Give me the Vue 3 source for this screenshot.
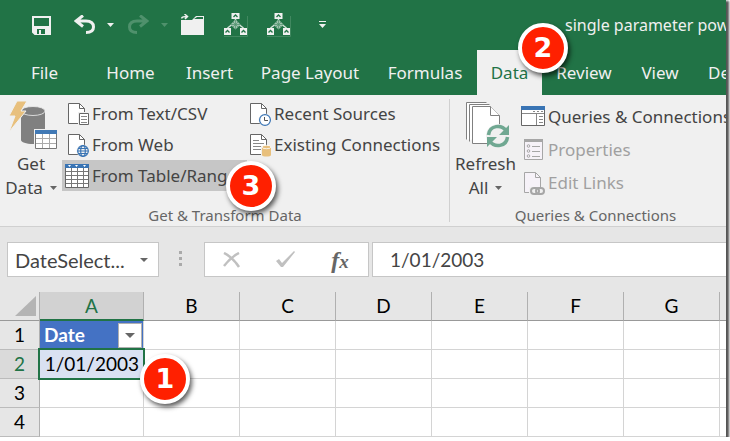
<script setup>
import { ref } from 'vue'

const tabs = ['Home', 'Insert', 'Page Layout', 'Formulas', 'Data', 'Review', 'View', 'Developer']
const activeTab = ref('Data')
const columns = ['A', 'B', 'C', 'D', 'E', 'F', 'G', 'H']
const rows = [1, 2, 3, 4]
const nameBox = ref('DateSelect...')
const formula = ref('1/01/2003')
</script>

<template>
  <main class="window">
    <header class="titlebar">
      <nav class="quick" aria-label="Quick access">
        <button aria-label="Save">
          <svg width="19" height="19" viewBox="0 0 19 19"><path d="M1 1h17v17H3l-2-2z" fill="none" stroke="#f0f0f0" stroke-width="2" /><path d="M2 10h15v8H2z" fill="#f0f0f0" /><path d="M5 13h8v5H5z" fill="#217346" /><path d="M7 14h2v4H7z" fill="#f0f0f0" /></svg>
        </button>
        <button aria-label="Undo">
          <svg width="22" height="20" viewBox="0 0 22 20"><path d="M9 .5L2 6l7 5.500M2 6h10c5 0 7.500 2.500 7.500 6S17 17.500 12 17.500" fill="none" stroke="#f0f0f0" stroke-width="3" /></svg>
        </button>
        <button aria-label="Undo options"><svg width="7" height="4"><path d="M0 0h7L3.500 4z" fill="#f0f0f0" /></svg></button>
        <button aria-label="Redo">
          <svg width="22" height="20" viewBox="0 0 22 20"><path d="M13 .5L20 6l-7 5.500M20 6H10c-5 0-7.500 2.500-7.500 6S5 17.500 10 17.500" fill="none" stroke="#4f916c" stroke-width="3" /></svg>
        </button>
        <button aria-label="Redo options"><svg width="7" height="4"><path d="M0 0h7L3.500 4z" fill="#4f916c" /></svg></button>
        <button aria-label="Open">
          <svg width="23" height="22" viewBox="0 0 23 22"><path d="M0 6h11l4-4h8v19H0z" fill="#f0f0f0" /><path d="M13 5l3-2h6v2z" fill="#217346" /><path d="M.5 4.500C1 2.500 3 2.500 6 2.500M3.500 0L6.500 2.500 4 5" fill="none" stroke="#f0f0f0" stroke-width="1.500" /></svg>
        </button>
        <button v-for="n in 2" :key="n" :aria-label="'Macro ' + n">
          <svg width="24" height="24" viewBox="0 0 24 24">
            <path d="M11.500 6v3M7.500 12L3.500 15M15.500 12l4 3" stroke="#d5e4db" stroke-width="1.500" />
            <path d="M11.500 6.500l5 5-5 5-5-5z" fill="#a0c4af" />
            <path d="M9 9l5 5M14 9l-5 5M11.500 7v9M7 11.500h9" stroke="#4f916c" stroke-width=".7" />
            <path d="M7.500 0h8v6h-8zM0 15.500h7v6H0zM8 15.500h7v6H8zM16 15.500h7v6h-7z" fill="none" />
            <path d="M7.500 0h8v6h-8zM0 15h7v7H0zM16 15h7v7h-7z" fill="#f0f0f0" />
            <path d="M9.500 4l2-2 2 2M1.500 19.500l2-2 2 2M17.500 19.500l2-2 2 2" fill="none" stroke="#217346" stroke-width="1.300" />
            <path d="M0 23.500h23.500V3" fill="none" stroke="#4f916c" stroke-width=".7" />
          </svg>
        </button>
        <button aria-label="Customize toolbar"><svg width="7" height="8"><path d="M0 0h7v1H0zM0 3h7L3.500 7z" fill="#f0f0f0" /></svg></button>
      </nav>
      <span class="title">single parameter power query</span>
    </header>

    <nav class="tabs" aria-label="Ribbon tabs">
      <button class="tab">File</button>
      <button v-for="tab in tabs" :key="tab" class="tab" :class="{ active: tab === activeTab }" @click="activeTab = tab">{{ tab }}</button>
    </nav>

    <section class="ribbon">
      <div class="group get-group">
        <button class="large">
          <svg width="49" height="50" viewBox="0 0 49 50">
            <path d="M12 9v30c0 2 5 4 12 4s12-2 12-4V9z" fill="#808080" />
            <ellipse cx="24" cy="10" rx="12" ry="4.500" fill="#808080" stroke="#f0f0f0" stroke-width=".8" />
            <path d="M8 0h10l-6 10h5L0 31l6-16H0z" fill="#e8c07d" stroke="#f0f0f0" />
            <path d="M25 28h24v22H25z" fill="#f0f0f0" />
            <path d="M26.500 30.500h21v17h-21z" fill="#fff" stroke="#777" />
            <path d="M33.500 32v15M40.500 32v15M27 37.500h20M27 42.500h20" stroke="#aaa" />
            <path d="M26 29h22v4H26z" fill="#4179b5" />
          </svg>
          <span>Get</span>
          <span class="with-arrow">Data <svg width="7" height="4"><path d="M0 0h7L3.500 4z" fill="#666" /></svg></span>
        </button>
        <div class="commands first">
          <button class="command">
            <svg width="24" height="24" viewBox="0 0 24 24"><path d="M3.500 1.500h11l5 5v15h-16z" fill="#fff" stroke="#666" /><path d="M14.500 1.500v5h5" fill="none" stroke="#666" /><path d="M13 10h11v14H13z" fill="#f0f0f0" /><path d="M14.500 11.500h9v11h-9z" fill="#fff" stroke="#666" /><path d="M16 14.500h6M16 17.500h6M16 20.500h6" stroke="#888" /></svg>
            From Text/CSV
          </button>
          <button class="command">
            <svg width="24" height="24" viewBox="0 0 24 24"><path d="M3.500 1.500h11l5 5v15h-16z" fill="#fff" stroke="#666" /><path d="M14.500 1.500v5h5" fill="none" stroke="#666" /><circle cx="18" cy="18" r="6.500" fill="#f0f0f0" /><g fill="none" stroke="#3974b4" stroke-width="1.200"><circle cx="18" cy="18" r="5.300" /><ellipse cx="18" cy="18" rx="2.300" ry="5.300" /><path d="M12.500 18h11M13.500 15.500h9M13.500 20.500h9" /></g></svg>
            From Web
          </button>
          <button class="command selected">
            <svg width="24" height="24" viewBox="0 0 24 24"><path d="M.5.500h23v23H.5z" fill="#fff" stroke="#666" /><path d="M6.500 4v19M12.500 4v19M18.500 4v19M1 7.500h22M1 11.500h22M1 15.500h22M1 19.500h22" stroke="#777" /><path d="M0 0h24v4H0z" fill="#3974b4" /><path d="M3 1h3L4.500 3zM10 1h3l-1.500 2zM18 1h3l-1.500 2z" fill="#fff" /></svg>
            From Table/Range
          </button>
        </div>
        <div class="commands">
          <button class="command">
            <svg width="24" height="24" viewBox="0 0 24 24"><path d="M3.500 1.500h11l5 5v15h-16z" fill="#fff" stroke="#666" /><path d="M14.500 1.500v5h5" fill="none" stroke="#666" /><circle cx="18" cy="18" r="6.500" fill="#f0f0f0" /><circle cx="18" cy="18" r="5.400" fill="#fff" stroke="#3974b4" stroke-width="1.200" /><path d="M17.500 15v3.500H21" fill="none" stroke="#555" /></svg>
            Recent Sources
          </button>
          <button class="command">
            <svg width="24" height="24" viewBox="0 0 24 24"><path d="M3.500 1.500h11l5 5v15h-16z" fill="#fff" stroke="#666" /><path d="M14.500 1.500v5h5" fill="none" stroke="#666" /><path d="M6 7.500h6M6 10.500h11M6 13.500h8M6 16.500h8" stroke="#888" /><path d="M14 13h10v11H14z" fill="#f0f0f0" /><path d="M15 14v8c0 2 9 2 9 0v-8z" fill="#e8c07d" /><ellipse cx="19.500" cy="14" rx="4.500" ry="1.700" fill="#e8c07d" stroke="#fff" stroke-width=".8" /></svg>
            Existing Connections
          </button>
        </div>
        <p class="caption">Get &amp; Transform Data</p>
      </div>

      <div class="group query-group">
        <button class="large">
          <svg width="45" height="50" viewBox="0 0 45 50">
            <g fill="#fff" stroke="#808080"><path d="M.5 38.500v-37h20v37" stroke="none" /><path d="M.5 38.500v-37h20" fill="none" /><path d="M3.500 40.500v-37h20v5" stroke="none" /><path d="M3.500 40.500v-37h20" fill="none" /><path d="M6.500 5.500h18l9 9v28h-27z" /><path d="M24.500 5.500v9h9" /></g>
            <circle cx="32" cy="35" r="12" fill="#f0f0f0" />
            <g fill="none" stroke="#70a892" stroke-width="3.500"><path d="M22.500 34c1-10 13-11 18-4M41.500 36c-1 10-13 11-18 4" /></g>
            <path d="M43 24v10H33zM21 46V36h10z" fill="#70a892" />
          </svg>
          <span>Refresh</span>
          <span class="with-arrow">All <svg width="7" height="4"><path d="M0 0h7L3.500 4z" fill="#666" /></svg></span>
        </button>
        <div class="commands second">
          <button class="command">
            <svg width="24" height="24" viewBox="0 0 24 24"><path d="M.5 2.500h23v18H.5z" fill="#fff" stroke="#666" /><path d="M0 1h24v4H0z" fill="#3974b4" /><path d="M12 6.500h2M16 6.500h2M20 6.500h2M15.500 9v11M1 8.500h22" stroke="#888" /><path d="M18 11.500h4M18 14.500h4M18 17.500h4" stroke="#888" /></svg>
            Queries &amp; Connections
          </button>
          <button class="command" disabled>
            <svg width="24" height="24" viewBox="0 0 24 24"><path d="M3.500 1.500h18v20h-18z" fill="#f6f2f8" stroke="#a6a6a6" /><path d="M3 1h19v3H3z" fill="#a6a6a6" /><g fill="none" stroke="#a6a6a6"><circle cx="7.500" cy="8" r="1.300" /><circle cx="7.500" cy="13" r="1.300" /><circle cx="7.500" cy="18" r="1.300" /><path d="M11 8.500h8M11 13.500h8M11 18.500h8" /></g></svg>
            Properties
          </button>
          <button class="command" disabled>
            <svg width="24" height="24" viewBox="0 0 24 24"><path d="M3.500 1.500h11l5 5v15h-16z" fill="#f6f2f8" stroke="#a6a6a6" /><path d="M14.500 1.500v5h5" fill="none" stroke="#a6a6a6" /><path d="M8 16h16v8H8z" fill="#f0f0f0" /><g fill="none" stroke="#a6a6a6" stroke-width="2"><rect x="10" y="17" width="8" height="6" rx="3" /><rect x="15" y="17" width="8" height="6" rx="3" /></g></svg>
            Edit Links
          </button>
        </div>
        <p class="caption">Queries &amp; Connections</p>
      </div>
    </section>

    <section class="formula-bar">
      <div class="name-box">
        <input v-model="nameBox" aria-label="Name box">
        <button aria-label="Show names"><svg width="8" height="4"><path d="M0 0h8L4 4z" fill="#666" /></svg></button>
      </div>
      <svg class="grip" width="3" height="15"><path d="M0 0h3v3H0zM0 6h3v3H0zM0 12h3v3H0z" fill="#aaa" /></svg>
      <div class="actions">
        <button aria-label="Cancel"><svg width="18" height="16" viewBox="0 0 18 16"><path d="M1 1c6 3 11 8 15 14M16 1C10 4 5 9 1 14" fill="none" stroke="#c0c0c0" stroke-width="2.500" /></svg></button>
        <button aria-label="Enter"><svg width="20" height="17" viewBox="0 0 20 17"><path d="M0 10l3-2 3 4L18 0l1 1L7 16H5z" fill="#c0c0c0" /></svg></button>
        <button aria-label="Insert function" class="fx">f<span>x</span></button>
      </div>
      <input v-model="formula" class="formula" aria-label="Formula">
    </section>

    <table class="sheet">
      <thead>
        <tr>
          <th class="corner"><svg width="21" height="20"><path d="M21 0v20H0z" fill="#b4b4b4" /></svg></th>
          <th v-for="col in columns" :key="col" scope="col" :class="['col', 'col-' + col]">{{ col }}</th>
        </tr>
      </thead>
      <tbody>
        <tr v-for="row in rows" :key="row">
          <th scope="row" :class="{ current: row === 2 }">{{ row }}</th>
          <template v-for="col in columns" :key="col">
            <td v-if="col === 'A' && row === 1" class="field">
              <div>Date<button aria-label="Filter Date"><svg width="10" height="5"><path d="M0 0h10L5 5z" fill="#666" /></svg></button></div>
            </td>
            <td v-else-if="col === 'A' && row === 2" class="chosen">{{ formula }}</td>
            <td v-else></td>
          </template>
        </tr>
      </tbody>
    </table>

    <span class="badge step-1">1</span>
    <span class="badge step-2">2</span>
    <span class="badge step-3">3</span>
  </main>
</template>

<style>
body { background: #fff; }
</style>

<style scoped>
* { box-sizing: border-box; }
.window { position: relative; margin-right: 4px; font-family: "Noto Sans", "Open Sans", sans-serif; font-size: 17px; color: #444; background: #e6e6e6; box-shadow: 2px 2px 2px 1px #555; }
button { padding: 0; border: 0; background: none; color: inherit; font: inherit; white-space: nowrap; }
input { min-width: 0; border: 0; background: none; color: inherit; font: inherit; outline: 0; }
svg { display: block; flex: none; }
.titlebar { display: flex; align-items: center; height: 50px; padding-left: 20px; background: #217346; color: #f0f0f0; overflow: hidden; }
.quick { display: grid; grid-template-columns: 43px 43px 9px 45px 9px 46px 42px 43px 45px; flex: none; width: 545px; align-items: center; }
.quick button { display: grid; place-items: center; }
.title { font-size: 16px; line-height: 24px; white-space: nowrap; }
.tabs { display: grid; grid-template-columns: 89px 83px 75px 126px 104px 65px 84px 68px 1fr; height: 45px; background: #217346; color: #f0f0f0; overflow: hidden; }
.tab.active { background: #f0f0f0; color: #217346; }
.tab:last-child { padding-left: 14px; text-align: left; }
.ribbon { display: flex; height: 132px; background: #f0f0f0; border-bottom: 1px solid #d0d0d0; overflow: hidden; }
.group { display: grid; grid-template-rows: 107px 20px; padding: 3px 0 0; }
.get-group { position: relative; flex: none; grid-template-columns: 62px 185px 203px; }
.get-group::after { content: ""; position: absolute; right: 0; top: 4px; bottom: 4px; width: 1px; background: #d0d0d0; }
.query-group { grid-template-columns: 71px 220px; }
.large { display: flex; flex-direction: column; align-items: center; justify-content: flex-start; padding-top: 3px; line-height: 24px; }
.large > svg { margin-bottom: 1px; margin-left: 5px; }
.with-arrow { display: flex; align-items: center; gap: 7px; }
.commands { display: flex; flex-direction: column; }
.command { display: flex; align-items: center; gap: 3px; height: 31px; text-align: left; }
.first .command { padding-left: 3px; }
.second { padding-top: 2px; }
.second .command { height: 33px; }
.command.selected { background: #c6c6c6; }
.command:disabled { color: #a0a0a0; }
.caption { grid-column: 1 / -1; margin: 0; text-align: center; font-size: 15px; line-height: 20px; color: #666; }
.formula-bar { display: flex; align-items: flex-start; height: 65px; padding: 15px 0 0 7px; font-family: Lato, "Open Sans", sans-serif; font-size: 19px; overflow: hidden; }
.name-box { display: flex; align-items: center; width: 152px; height: 35px; padding: 0 10px 0 7px; background: #fff; border: 1px solid #c6c6c6; font-size: 20px; }
.name-box input { flex: 1; padding: 0; }
.grip { margin: 9px 22px 0 20px; }
.actions { display: grid; grid-template-columns: repeat(3, 54px); width: 165px; height: 35px; background: #fff; border: 1px solid #c6c6c6; }
.actions button { display: grid; place-items: center; }
.actions .fx { display: flex; align-items: center; justify-content: center; color: #666; font: italic bold 24px/24px "Liberation Serif", serif; }
.fx span { font-size: 19px; padding-top: 5px; }
.formula { flex: 1; height: 35px; margin-left: 3px; padding: 0 17px; background: #fff; border: 1px solid #c6c6c6; border-right: 0; }
.sheet { width: 100%; table-layout: fixed; border-spacing: 0; font: 19px/24px Lato, "Open Sans", sans-serif; color: #000; background: #fff; }
th, td { height: 29px; padding: 0; border-right: 1px solid #d4d4d4; border-bottom: 1px solid #d4d4d4; }
th { background: #e6e6e6; font-weight: 400; border-right-color: #b0b0b0; }
thead th { border-bottom-color: #999; }
tbody th:first-child { border-bottom-color: #bbb; }
.corner { width: 40px; }
.corner svg { margin-left: 15px; }
.col { width: 96px; }
.col-A { width: 104px; color: #217346; background: #d2d2d2; border-bottom: 2px solid #217346; }
.col-H { width: auto; color: transparent; overflow: hidden; }
.current { color: #217346; background: #dadada; }
th:last-child, td:last-child { border-right: 0; }
.field { background: #4472c4; color: #fff; font-weight: 700; }
.field div { display: flex; align-items: center; justify-content: space-between; padding: 0 1px 0 4px; }
.field button { display: grid; place-items: center; width: 24px; height: 25px; background: #fff; border: 1px solid #b0b0b0; }
.chosen { position: relative; padding-right: 4px; text-align: right; background: #d9e1f2; }
.chosen::after { content: ""; position: absolute; inset: -2px; border: 2px solid #217346; }
.badge { position: absolute; display: grid; place-items: center; width: 50px; height: 50px; border: 4px solid #fff; border-radius: 50%; background: #ff2000; color: #fff; font: bold 27px/30px "DejaVu Sans", sans-serif; box-shadow: 2px 3px 5px rgba(0, 0, 0, .65); }
.step-1 { left: 140px; top: 354px; }
.step-2 { left: 518px; top: 23px; }
.step-3 { left: 226px; top: 161px; }
</style>
